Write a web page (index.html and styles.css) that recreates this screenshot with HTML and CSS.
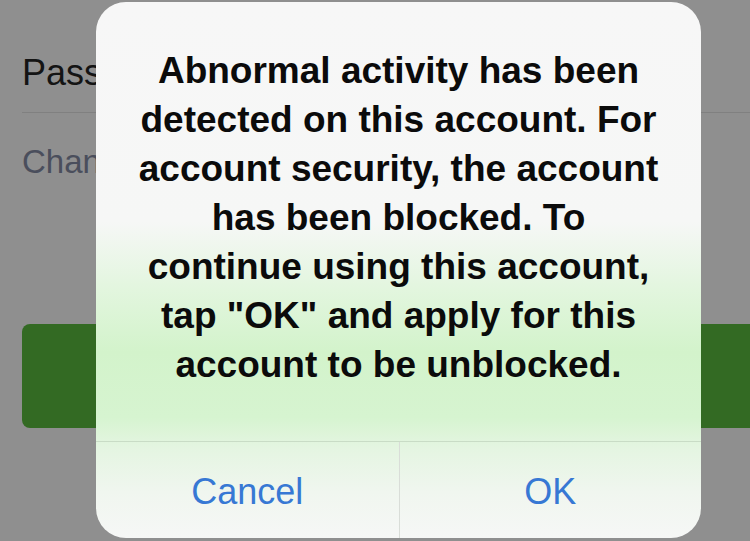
FILE: index.html
```html
<!DOCTYPE html>
<html lang="en">
  <head>
    <meta charset="UTF-8" />
    <meta name="viewport" content="width=device-width, initial-scale=1.0" />
    <title>Account blocked</title>
    <link rel="stylesheet" href="styles.css">
  </head>
  <body>
    <div class="settings">
      <div class="row-pass">Password</div>
      <div class="row-change">Change password</div>
      <div class="green-button"></div>
    </div>

    <div class="alert">
      <div class="message">
        Abnormal activity has been<br />
        detected on this account. For<br />
        account security, the account<br />
        has been blocked. To<br />
        continue using this account,<br />
        tap "OK" and apply for this<br />
        account to be unblocked.
      </div>
      <div class="actions">
        <button class="action">Cancel</button>
        <button class="action">OK</button>
      </div>
    </div>
  </body>
</html>
```

FILE: styles.css
```css
html, body {
  margin: 0;
  height: 541px;
  overflow: hidden;
}

body {
  background-color: #8f8f8f;
  font-family: "Liberation Sans", Arial, sans-serif;
  position: relative;
}

.settings {
  display: flex;
  flex-direction: column;
  padding-left: 22px;
}

.row-pass {
  font-size: 36px;
  line-height: 36px;
  color: #141414;
  padding-top: 55px;
  padding-bottom: 21px;
  border-bottom: 1px solid #808080;
  white-space: nowrap;
}

.row-change {
  font-size: 33px;
  line-height: 33px;
  color: #4a4e5c;
  margin-top: 32px;
  white-space: nowrap;
}

.green-button {
  margin-top: 146px;
  margin-right: -20px;
  height: 104px;
  background-color: #336a23;
  border-radius: 8px;
}

.alert {
  position: absolute;
  left: 96px;
  top: 2px;
  width: 605px;
  height: 536px;
  border-radius: 30px;
  overflow: hidden;
  display: flex;
  flex-direction: column;
  background: linear-gradient(
    to bottom,
    #f7f7f7 0px,
    #f6f7f6 220px,
    #e3f6df 285px,
    #d3f3cb 350px,
    #d6f4d0 415px,
    #e4f5e1 445px,
    #f0f6ef 490px,
    #f6f7f6 536px
  );
}

.message {
  box-sizing: border-box;
  height: 440px;
  padding-top: 44px;
  text-align: center;
  font-size: 37px;
  font-weight: bold;
  line-height: 49px;
  color: #0b0b0b;
  white-space: nowrap;
  border-bottom: 1px solid #c9dcc6;
}

.actions {
  flex: 1;
  display: grid;
  grid-template-columns: 1fr 1fr;
}

.action {
  border: none;
  background: transparent;
  font-family: "Liberation Sans", Arial, sans-serif;
  font-size: 36px;
  color: #3778d4;
  padding: 4px 0 0 0;
}

.action + .action {
  border-left: 1px solid #d9ddd8;
}
```
